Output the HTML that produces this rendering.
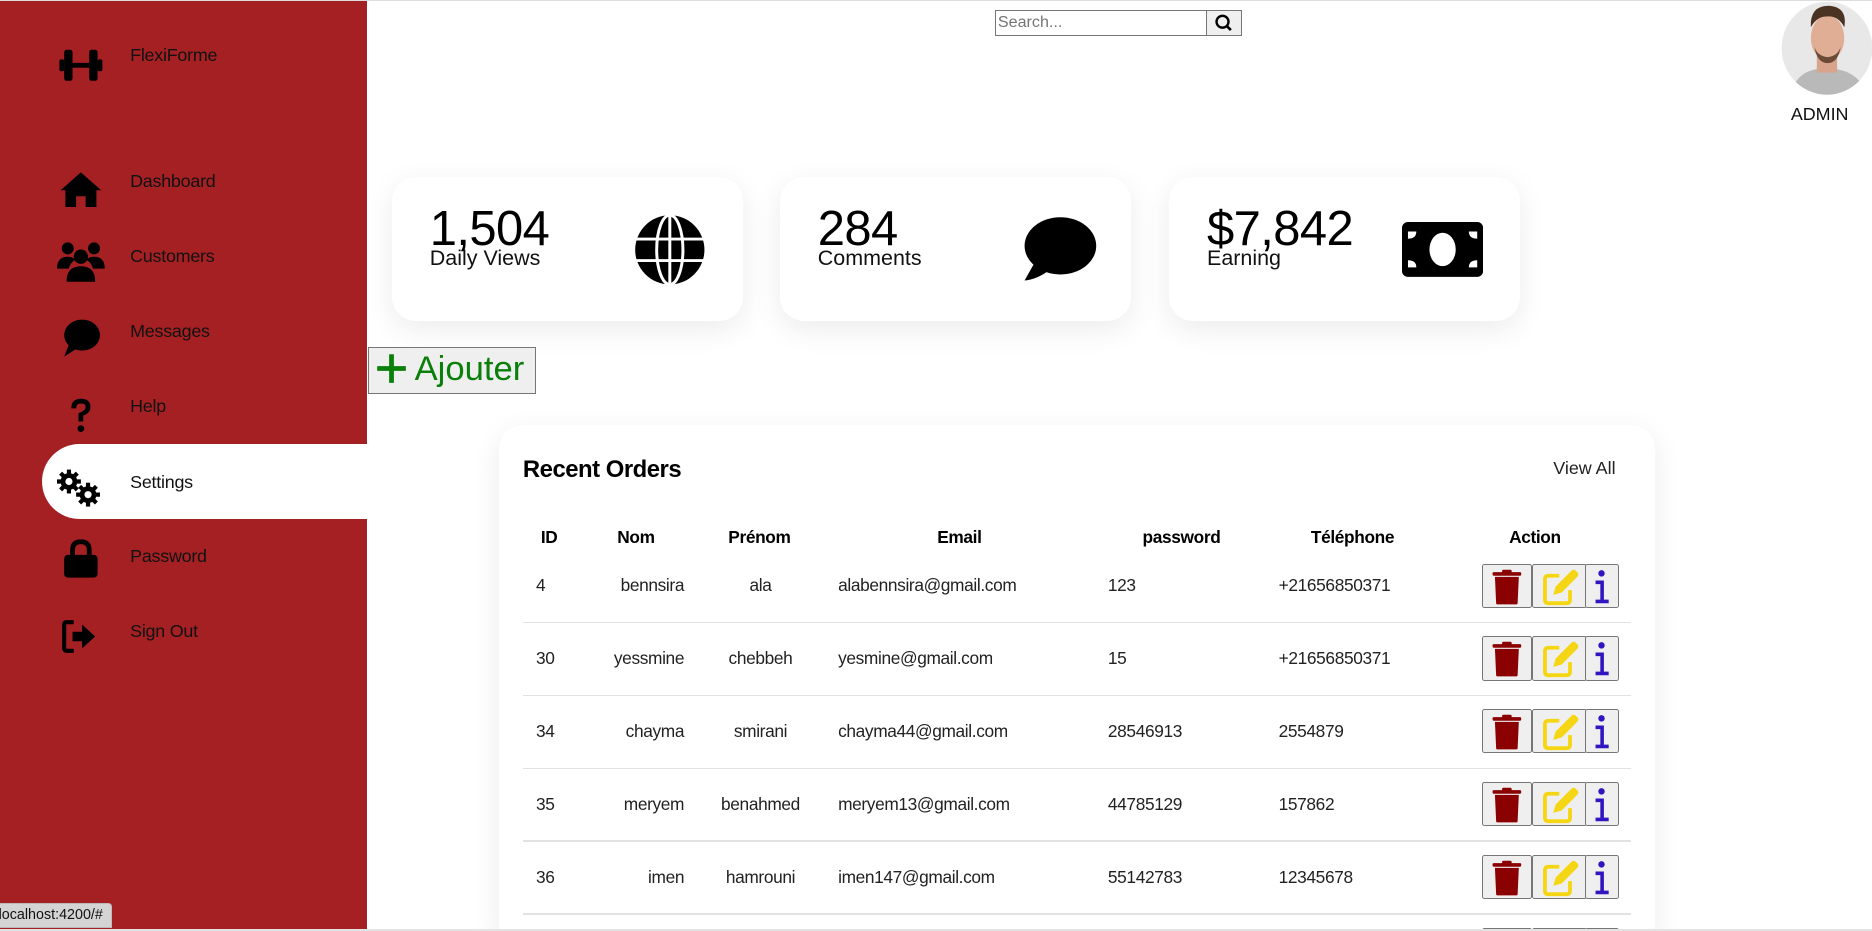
<!DOCTYPE html>
<html><head><meta charset="utf-8"><style>
html,body{margin:0;padding:0;overflow:hidden;background:#fff}
#root{zoom:1.19388;width:1568px;height:780px;position:relative;overflow:hidden;font-family:"Liberation Sans",sans-serif;color:#000}
.abs{position:absolute}
.sb{left:0;top:1px;width:307px;height:777px;background:#a52023}
.nav{position:absolute;left:109px;font-size:15px;color:#111;letter-spacing:-0.2px}
.ic{position:absolute;left:48px}
.card{position:absolute;top:148px;width:294px;height:121px;background:#fff;border-radius:20px;box-shadow:0 7px 25px rgba(0,0,0,0.08)}
.num{position:absolute;left:32px;top:20px;font-size:41px;letter-spacing:-0.5px}
.lbl{position:absolute;left:32px;top:58px;font-size:18px;color:#111}
.th{position:absolute;top:441px;font-size:14.5px;font-weight:bold;letter-spacing:-0.3px}
.td{position:absolute;font-size:14.5px;color:#222;letter-spacing:-0.3px}
.line{position:absolute;left:438px;width:928px;height:1px;background:#e2e2e2}
.btn{position:absolute;height:37px;background:#efefef;border:1px solid #767676;border-radius:2px;box-sizing:border-box}
</style></head><body><div id="root">
<div class="abs" style="left:0;top:0;width:1568px;height:1px;background:#ddd"></div>
<div class="abs sb"></div>
<div class="abs" style="left:35px;top:372px;width:272px;height:63px;background:#fff;border-radius:32px 0 0 32px"></div>

<svg class="ic" style="top:38px" width="40" height="34" viewBox="0 0 40 34"><rect x="2" y="12" width="4" height="10" rx="1.5"/><rect x="6" y="4" width="7" height="26" rx="2"/><rect x="13" y="15" width="14" height="4"/><rect x="27" y="4" width="7" height="26" rx="2"/><rect x="34" y="12" width="4" height="10" rx="1.5"/></svg>
<div class="nav" style="top:38px">FlexiForme</div>
<svg class="ic" style="top:142px" width="40" height="34" viewBox="0 0 40 34"><path d="M20 2 L37 17 L33 17 L33 31 L24 31 L24 22 L16 22 L16 31 L7 31 L7 17 L3 17 Z"/></svg>
<div class="nav" style="top:143px">Dashboard</div>
<svg class="ic" style="top:201px" width="40" height="36" viewBox="0 0 40 36"><circle cx="9" cy="7" r="5"/><circle cx="31" cy="7" r="5"/><circle cx="20" cy="14" r="6"/><path d="M0 24 Q0 14 9 14 Q14 14 15 17 Q11 19 10 24 Z"/><path d="M40 24 Q40 14 31 14 Q26 14 25 17 Q29 19 30 24 Z"/><path d="M8 35 Q8 22 20 22 Q32 22 32 35 Z"/></svg>
<div class="nav" style="top:206px">Customers</div>
<svg class="ic" style="top:265px" width="40" height="36" viewBox="0 0 40 36"><ellipse cx="21" cy="16" rx="15" ry="13"/><path d="M10 24 L6 34 L17 27 Z"/></svg>
<div class="nav" style="top:269px">Messages</div>
<svg class="ic" style="top:330px" width="40" height="36" viewBox="0 0 40 36"><path d="M12 12 Q12 4 20 4 Q28 4 28 11 Q28 16 22 18 L22 23 L18 23 L18 16 Q24 14 24 11 Q24 8 20 8 Q16 8 16 12 Z"/><circle cx="20" cy="29" r="2.8"/></svg>
<div class="nav" style="top:332px">Help</div>
<svg class="ic" style="top:390px" width="40" height="36" viewBox="0 0 40 36"><g fill="#000"><circle cx="10" cy="13" r="7"/><g stroke="#000" stroke-width="3.5"><line x1="10" y1="3" x2="10" y2="23"/><line x1="0" y1="13" x2="20" y2="13"/><line x1="3" y1="6" x2="17" y2="20"/><line x1="17" y1="6" x2="3" y2="20"/></g><circle cx="10" cy="13" r="3" fill="#fff"/><circle cx="26" cy="24" r="7"/><g stroke="#000" stroke-width="3.5"><line x1="26" y1="14" x2="26" y2="34"/><line x1="16" y1="24" x2="36" y2="24"/><line x1="19" y1="17" x2="33" y2="31"/><line x1="33" y1="17" x2="19" y2="31"/></g><circle cx="26" cy="24" r="3" fill="#fff"/></g></svg>
<div class="nav" style="top:395px">Settings</div>
<svg class="ic" style="top:450px" width="40" height="36" viewBox="0 0 40 36"><path d="M11 16 L11 11 Q11 2 20 2 Q29 2 29 11 L29 16 L25 16 L25 11 Q25 6 20 6 Q15 6 15 11 L15 16 Z"/><rect x="6" y="15" width="28" height="19" rx="3"/></svg>
<div class="nav" style="top:457px">Password</div>
<svg class="ic" style="top:515px" width="40" height="36" viewBox="0 0 40 36"><path d="M14 6 L8 6 Q6 6 6 8 L6 28 Q6 30 8 30 L14 30" fill="none" stroke="#000" stroke-width="3.5"/><path d="M13 14 L21 14 L21 8 L32 18 L21 28 L21 22 L13 22 Z"/></svg>
<div class="nav" style="top:520px">Sign Out</div>

<div class="abs" style="left:-2px;top:756px;width:96px;height:21px;background:#d4d4d4;border:1px solid #bbb;border-radius:0 3px 0 0;font-size:12px;line-height:20px;color:#111;box-sizing:border-box">localhost:4200/#</div>

<div class="abs" style="left:833px;top:8px;width:178px;height:22px;border:1px solid #767676;box-sizing:border-box;font-size:13.5px;color:#757575;line-height:20px;padding-left:2px">Search...</div>
<div class="abs" style="left:1010px;top:8px;width:30px;height:22px;border:1px solid #767676;background:#efefef;box-sizing:border-box"><svg width="28" height="20" viewBox="0 0 28 20"><circle cx="13" cy="9" r="5" fill="none" stroke="#000" stroke-width="2"/><line x1="16.5" y1="12.5" x2="20" y2="16" stroke="#000" stroke-width="2.2"/></svg></div>

<svg class="abs" style="left:1492px;top:1px" width="77" height="79" viewBox="0 0 77 79"><defs><clipPath id="cp"><ellipse cx="38.5" cy="39.5" rx="38" ry="39"/></clipPath></defs><g clip-path="url(#cp)"><rect width="77" height="79" fill="#e8e8e8"/><path d="M8 79 Q12 60 30 57 L46 57 Q66 60 72 79 Z" fill="#b9b9b9"/><rect x="30" y="44" width="17" height="16" fill="#d8a58c"/><ellipse cx="39" cy="31" rx="14" ry="19" fill="#dfae95"/><path d="M25 22 Q24 4 40 4 Q56 5 53 22 Q48 12 38 13 Q30 13 25 22Z" fill="#4a3322"/><path d="M28 38 Q30 52 39 52 Q48 52 50 38 Q48 46 39 47 Q30 46 28 38Z" fill="#6b4b36"/></g></svg>
<div class="abs" style="left:1500px;top:87px;font-size:15px;color:#111">ADMIN</div>

<div class="card" style="left:328px"><div class="num">1,504</div><div class="lbl">Daily Views</div>
<svg class="abs" style="left:203px;top:31px" width="60" height="60" viewBox="0 0 60 60"><circle cx="30" cy="30" r="29"/><g stroke="#fff" stroke-width="2.5" fill="none"><ellipse cx="30" cy="30" rx="11" ry="29"/><line x1="30" y1="0" x2="30" y2="60"/><line x1="0" y1="21" x2="60" y2="21"/><line x1="0" y1="39" x2="60" y2="39"/></g></svg></div>
<div class="card" style="left:653px"><div class="num">284</div><div class="lbl">Comments</div>
<svg class="abs" style="left:202px;top:33px" width="64" height="56" viewBox="0 0 64 56"><ellipse cx="33" cy="25" rx="30" ry="24"/><path d="M12 38 L3 54 Q14 53 24 45 Z"/></svg></div>
<div class="card" style="left:979px"><div class="num">$7,842</div><div class="lbl">Earning</div>
<svg class="abs" style="left:195px;top:38px" width="68" height="46" viewBox="0 0 68 46"><rect x="0" y="0" width="68" height="46" rx="5"/><ellipse cx="34" cy="23" rx="11" ry="14" fill="#fff"/><path d="M5 8 L12 8 Q12 14 5 14Z M63 8 L56 8 Q56 14 63 14Z M5 38 L12 38 Q12 32 5 32Z M63 38 L56 38 Q56 32 63 32Z" fill="#fff"/></svg></div>

<div class="abs" style="left:308px;top:291px;width:141px;height:39px;background:#efefef;border:1px solid #767676;box-sizing:border-box;color:#0a7f0a;font-size:29px;line-height:36px;padding-left:6px"><svg width="26" height="26" viewBox="0 0 26 26" style="vertical-align:-3px"><path d="M11 1h4v10h10v4H15v10h-4V15H1v-4h10z" fill="#0a7f0a"/></svg> Ajouter</div>

<div class="abs" style="left:418px;top:356px;width:968px;height:440px;background:#fff;border-radius:20px;box-shadow:0 7px 25px rgba(0,0,0,0.08)"></div>
<div class="abs" style="left:438px;top:382px;font-size:20px;font-weight:bold;letter-spacing:-0.4px">Recent Orders</div>
<div class="abs" style="left:1301px;top:384px;font-size:15px;color:#222">View All</div>
<div class="th" style="left:453px">ID</div>
<div class="th" style="left:517px">Nom</div>
<div class="th" style="left:610px">Prénom</div>
<div class="th" style="left:785px">Email</div>
<div class="th" style="left:957px">password</div>
<div class="th" style="left:1098px">Téléphone</div>
<div class="th" style="left:1264px">Action</div>

<div id="rows"></div>
<script>
var d=[["4","bennsira","ala","alabennsira@gmail.com","123","+21656850371"],["30","yessmine","chebbeh","yesmine@gmail.com","15","+21656850371"],["34","chayma","smirani","chayma44@gmail.com","28546913","2554879"],["35","meryem","benahmed","meryem13@gmail.com","44785129","157862"],["36","imen","hamrouni","imen147@gmail.com","55142783","12345678"],["","","","","",""]];
var h="";
var trash='<svg width="40" height="36" viewBox="0 0 40 36"><rect x="8" y="6" width="24" height="3" rx="1" fill="#8b0000"/><rect x="16" y="4" width="8" height="3" rx="1" fill="#8b0000"/><path d="M10 10 L30 10 L29 32 Q29 33 28 33 L12 33 Q11 33 11 32 Z" fill="#8b0000"/></svg>';
var edit='<svg width="44" height="36" viewBox="0 0 44 36"><path d="M22 9 L13 9 Q10 9 10 12 L10 29 Q10 32 13 32 L28 32 Q31 32 31 29 L31 21" fill="none" stroke="#f5d614" stroke-width="3.2"/><path d="M17 25 L19 18 L32 5 Q34 3 36 5 L37 6 Q39 8 37 10 L24 23 Z" fill="#f5d614"/></svg>';
var info='<svg width="26" height="36" viewBox="0 0 26 36"><circle cx="13" cy="7" r="2.7" fill="#3214c0"/><path d="M8 13 L15 13 L15 29 L19 29 L19 32 L8 32 L8 29 L12 29 L12 16 L8 16 Z" fill="#3214c0"/></svg>';
for(var i=0;i<6;i++){var r=d[i];var y=482+i*61;
if(r[0]){h+='<div class="td" style="left:449px;top:'+y+'px">'+r[0]+'</div>';
h+='<div class="td" style="right:'+(1568-573)+'px;top:'+y+'px">'+r[1]+'</div>';
h+='<div class="td" style="left:587px;width:100px;text-align:center;top:'+y+'px">'+r[2]+'</div>';
h+='<div class="td" style="left:702px;top:'+y+'px">'+r[3]+'</div>';
h+='<div class="td" style="left:928px;top:'+y+'px">'+r[4]+'</div>';
h+='<div class="td" style="left:1071px;top:'+y+'px">'+r[5]+'</div>';}
var by=472+i*61;
h+='<div class="btn" style="left:1241px;top:'+by+'px;width:42px">'+trash+'</div>';
h+='<div class="btn" style="left:1283px;top:'+by+'px;width:46px">'+edit+'</div>';
h+='<div class="btn" style="left:1328px;top:'+by+'px;width:28px">'+info+'</div>';
if(i<5)h+='<div class="line" style="top:'+(521+i*61)+'px"></div>';}
document.getElementById("rows").innerHTML=h;
</script>
<div class="abs" style="left:0;top:778px;width:1568px;height:2px;background:#e3e3e3"></div>
</div></body></html>
